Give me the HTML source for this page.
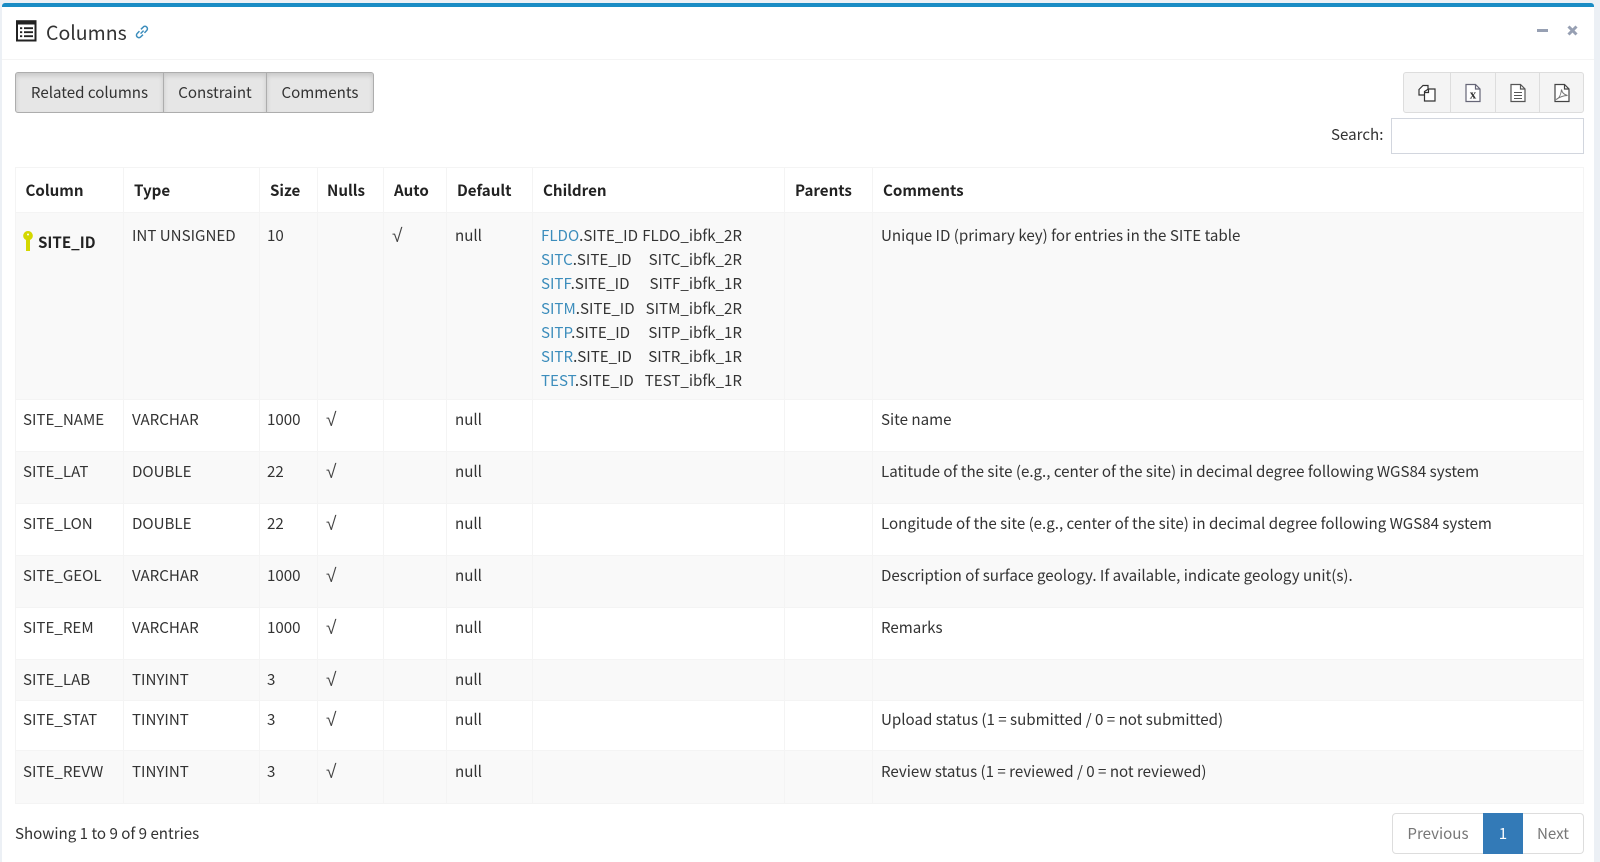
<!DOCTYPE html>
<html><head><meta charset="utf-8"><style>
html,body{margin:0;padding:0;width:1600px;height:862px;overflow:hidden;background:#ecf0f5}
body{font-family:"Noto Sans CJK SC","Liberation Sans",sans-serif;font-size:15.12px;color:#333;position:relative}
.a{position:absolute;white-space:nowrap}
#panel{position:absolute;left:2px;top:3px;width:1592px;height:859px;background:#fff;border-top:4px solid #1a8cc4;border-radius:3px 3px 0 0;box-sizing:border-box}
.bg{position:absolute;top:72px;height:41px;background:#e6e6e6;border:1px solid #adadad;box-sizing:border-box;text-align:center;line-height:39px;color:#333;box-shadow:inset 0 3px 5px rgba(0,0,0,.125)}
.ib{position:absolute;top:72px;height:41px;background:#f4f4f4;border:1px solid #ddd;box-sizing:border-box}
.ib svg{position:absolute;left:50%;top:50%;transform:translate(-50%,-50%)}
table{position:absolute;left:15px;top:167px;width:1569px;border-collapse:collapse;table-layout:fixed}
td,th{border:1px solid #f4f4f4;padding:7px 8px 8px;vertical-align:top;text-align:left;line-height:24px;box-sizing:border-box;font-weight:400;white-space:nowrap}
th{font-weight:700;color:#222;padding:10px 10px 10px;line-height:24px}
td:first-child{padding-left:7px}
th:first-child{padding-left:9.5px}
td:nth-child(3){padding-left:7px}
th:nth-child(4){padding-left:9px}
tr:nth-child(even) td{background:#f9f9f9}
.r td{padding:10px 8px 6px}
.r td:first-child{padding-left:7px}
.ln{display:block;height:24.2px;line-height:24.2px;position:relative;width:201px}
.ln i{position:absolute;right:0;font-style:normal;top:0}
.ln b{font-weight:400;color:#3c8dbc}
.s{font-family:"Liberation Sans",sans-serif;font-size:19px;line-height:0;color:#444;position:relative;top:1px}
.st td{padding-top:6px}
.rv td{padding-top:8px}
</style></head><body>
<div id="panel"></div>
<div class="a" style="left:2px;top:59px;width:1592px;height:1px;background:#f4f4f4"></div>
<svg class="a" style="left:16px;top:20px" width="21" height="22" viewBox="0 0 21 22"><rect x="1" y="1.200" width="18.500" height="19.300" fill="#fff" stroke="#222" stroke-width="2"/><rect x="1" y="1" width="18.500" height="3.500" fill="#222"/><path d="M4 8.200h2.200M8 8.200h9M4 12.200h2.200M8 12.200h9M4 16.200h2.200M8 16.200h9" stroke="#222" stroke-width="1.900"/></svg>
<div class="a" style="left:46px;top:17px;font-size:19.500px;line-height:30px;color:#333">Columns</div>
<svg class="a" style="left:134px;top:24px" width="16" height="16" viewBox="0 0 15 15" fill="none" stroke="#3c8dbc" stroke-width="1.400"><path d="M6.200 9 9 6.200"/><path d="M6.500 5 8.600 2.900a2.200 2.200 0 0 1 3.300 0 2.200 2.200 0 0 1 0 3.200L9.800 8.300"/><path d="M8.400 10 6.300 12.100a2.200 2.200 0 0 1-3.300 0 2.200 2.200 0 0 1 0-3.200L5.100 6.700"/></svg>
<div class="a" style="left:1537px;top:29px;width:11px;height:3px;background:#97a0b3"></div>
<svg class="a" style="left:1567px;top:25px" width="11" height="11" viewBox="0 0 11 11"><path d="M1.500 1.500l8 8M9.500 1.500l-8 8" stroke="#97a0b3" stroke-width="3"/></svg>

<div class="bg" style="left:15px;width:149px;border-radius:3px 0 0 3px">Related columns</div>
<div class="bg" style="left:163px;width:104px">Constraint</div>
<div class="bg" style="left:266px;width:108px;border-radius:0 3px 3px 0">Comments</div>

<div class="ib" style="left:1403px;width:48px;border-radius:3px 0 0 3px"><svg width="18" height="18" viewBox="0 0 18 18" fill="#fff" stroke="#333" stroke-width="1.200"><path d="M1 5.500 5 1.500h5v9.500H1z"/><path d="M6.500 7.500 10.500 5H17v12H6.500z"/><path d="M10.500 5v3.500H6.500" fill="none"/></svg></div>
<div class="ib" style="left:1450px;width:46px"><svg width="16" height="19" viewBox="0 0 16 19" fill="#fff" stroke="#667" stroke-width="1.200"><path d="M1 1h9.500L15 5.500V18H1z"/><path d="M10.500 1v4.500H15" fill="none"/><text x="8" y="15" font-family="Liberation Serif,serif" font-size="13" font-weight="700" text-anchor="middle" fill="#333" stroke="none">x</text></svg></div>
<div class="ib" style="left:1495px;width:45px"><svg width="16" height="19" viewBox="0 0 16 19" fill="#fff" stroke="#555" stroke-width="1.200"><path d="M1 1h9.500L15 5.500V18H1z"/><path d="M10.500 1v4.500H15" fill="none"/><path d="M4 9h8M4 12h8M4 15h8" stroke-width="1"/></svg></div>
<div class="ib" style="left:1539px;width:45px;border-radius:0 3px 3px 0"><svg width="16" height="19" viewBox="0 0 16 19" fill="#fff" stroke="#444" stroke-width="1.200"><path d="M1 1h9.500L15 5.500V18H1z"/><path d="M10.500 1v4.500H15" fill="none"/><path d="M2 16c3-1 5-5 5.500-10 .5 3 2 5 6 6-4 0-7 1-11.500 4z" fill="none" stroke="#777" stroke-width="1"/></svg></div>

<div class="a" style="left:1331px;top:122px;line-height:24px">Search:</div>
<div class="a" style="left:1391px;top:118px;width:193px;height:36px;border:1px solid #d2d6de;box-sizing:border-box;background:#fff"></div>

<table>
<colgroup><col style="width:108px"><col style="width:136px"><col style="width:58px"><col style="width:66px"><col style="width:63px"><col style="width:86px"><col style="width:252px"><col style="width:88px"><col></colgroup>
<tr style="height:45px"><th>Column</th><th>Type</th><th>Size</th><th>Nulls</th><th>Auto</th><th>Default</th><th>Children</th><th>Parents</th><th>Comments</th></tr>
<tr class="r" style="height:187px"><td style="position:relative"><svg style="position:absolute;left:6.500px;top:18px" width="10" height="21" viewBox="0 0 10 21"><path d="M5 0a4.700 4.700 0 0 1 2 9v11H3V9A4.700 4.700 0 0 1 5 0z" fill="#d4d800"/><circle cx="5" cy="3.500" r="1" fill="#fff"/></svg><span style="position:absolute;left:22px;top:17px;font-weight:700;color:#222">SITE_ID</span></td><td>INT UNSIGNED</td><td style="padding-left:7px">10</td><td></td><td><span class="s">√</span></td><td>null</td><td>
<span class="ln"><b>FLDO</b>.SITE_ID<i>FLDO_ibfk_2R</i></span>
<span class="ln"><b>SITC</b>.SITE_ID<i>SITC_ibfk_2R</i></span>
<span class="ln"><b>SITF</b>.SITE_ID<i>SITF_ibfk_1R</i></span>
<span class="ln"><b>SITM</b>.SITE_ID<i>SITM_ibfk_2R</i></span>
<span class="ln"><b>SITP</b>.SITE_ID<i>SITP_ibfk_1R</i></span>
<span class="ln"><b>SITR</b>.SITE_ID<i>SITR_ibfk_1R</i></span>
<span class="ln"><b>TEST</b>.SITE_ID<i>TEST_ibfk_1R</i></span>
</td><td></td><td>Unique ID (primary key) for entries in the SITE table</td></tr>
<tr style="height:52px"><td>SITE_NAME</td><td>VARCHAR</td><td>1000</td><td><span class="s">√</span></td><td></td><td>null</td><td></td><td></td><td>Site name</td></tr>
<tr style="height:52px"><td>SITE_LAT</td><td>DOUBLE</td><td>22</td><td><span class="s">√</span></td><td></td><td>null</td><td></td><td></td><td>Latitude of the site (e.g., center of the site) in decimal degree following WGS84 system</td></tr>
<tr style="height:52px"><td>SITE_LON</td><td>DOUBLE</td><td>22</td><td><span class="s">√</span></td><td></td><td>null</td><td></td><td></td><td>Longitude of the site (e.g., center of the site) in decimal degree following WGS84 system</td></tr>
<tr style="height:52px"><td>SITE_GEOL</td><td>VARCHAR</td><td>1000</td><td><span class="s">√</span></td><td></td><td>null</td><td></td><td></td><td>Description of surface geology. If available, indicate geology unit(s).</td></tr>
<tr style="height:52px"><td>SITE_REM</td><td>VARCHAR</td><td>1000</td><td><span class="s">√</span></td><td></td><td>null</td><td></td><td></td><td>Remarks</td></tr>
<tr style="height:41px"><td>SITE_LAB</td><td>TINYINT</td><td>3</td><td><span class="s">√</span></td><td></td><td>null</td><td></td><td></td><td></td></tr>
<tr class="st" style="height:50px"><td>SITE_STAT</td><td>TINYINT</td><td>3</td><td><span class="s">√</span></td><td></td><td>null</td><td></td><td></td><td>Upload status (1 = submitted / 0 = not submitted)</td></tr>
<tr class="rv" style="height:53px"><td>SITE_REVW</td><td>TINYINT</td><td>3</td><td><span class="s">√</span></td><td></td><td>null</td><td></td><td></td><td>Review status (1 = reviewed / 0 = not reviewed)</td></tr>
</table>

<div class="a" style="left:15px;top:821px;line-height:24px">Showing 1 to 9 of 9 entries</div>
<div class="a" style="left:1392px;top:813px;width:92px;height:41px;border:1px solid #ddd;border-radius:4px 0 0 4px;box-sizing:border-box;text-align:center;line-height:39px;color:#777">Previous</div>
<div class="a" style="left:1483px;top:813px;width:40px;height:41px;background:#337ab7;border:1px solid #337ab7;box-sizing:border-box;text-align:center;line-height:39px;color:#fff">1</div>
<div class="a" style="left:1523px;top:813px;width:61px;height:41px;border:1px solid #ddd;border-left:0;border-radius:0 4px 4px 0;box-sizing:border-box;text-align:center;line-height:39px;color:#777">Next</div>
</body></html>
